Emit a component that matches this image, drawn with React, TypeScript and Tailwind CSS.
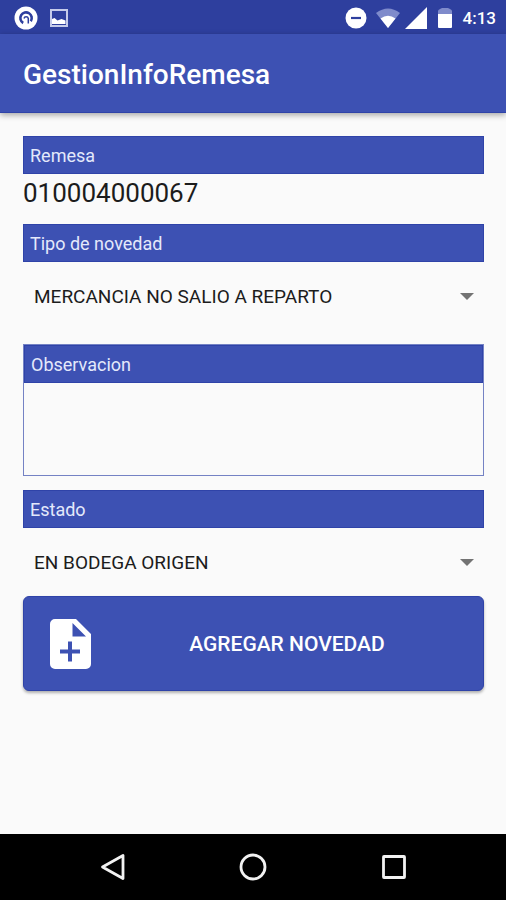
import React from "react";

type FieldLabelProps = {
  htmlFor: string;
  children: React.ReactNode;
};

function FieldLabel({ htmlFor, children }: FieldLabelProps) {
  return (
    <label
      htmlFor={htmlFor}
      className="block border border-[#2f43a8] bg-[#3d51b3] px-1.5 pt-[7px] pb-[5px] text-lg leading-6 text-[#e4e9fb]"
    >
      {children}
    </label>
  );
}

type SpinnerProps = {
  id: string;
  options: string[];
};

/** Android-style drop-down: plain text with a small caret on the right. */
function Spinner({ id, options }: SpinnerProps) {
  return (
    <div className="relative">
      <select
        id={id}
        className="h-[68px] w-full appearance-none bg-transparent pt-0.5 pr-10 pl-[11px] text-[19px] text-[#1c1c1c] outline-none"
      >
        {options.map((option) => (
          <option key={option}>{option}</option>
        ))}
      </select>
      <svg
        viewBox="0 0 14 7"
        className="pointer-events-none absolute top-[31px] right-2.5 h-[7px] w-3.5 fill-[#737373]"
        aria-hidden
      >
        <path d="M0 0h14L7 7z" />
      </svg>
    </div>
  );
}

function StatusBar() {
  return (
    <div className="flex h-[34px] items-center justify-between bg-[#2e3f9e] pt-px pr-2.5 pl-3.5 text-white">
      <div className="flex items-center gap-3">
        <svg viewBox="0 0 24 24" className="size-6" aria-hidden>
          <circle cx="12" cy="12" r="11.5" fill="#fff" />
          <path
            d="M9.200 17A5.700 5.700 0 1 1 16.800 15.200"
            fill="none"
            stroke="#2e3f9e"
            strokeWidth="2.600"
          />
          <path
            d="M10 12.500a2.200 2.200 0 0 1 4.300 0V17.500"
            fill="none"
            stroke="#2e3f9e"
            strokeWidth="1.500"
          />
        </svg>
        <svg viewBox="0 0 18 18" className="size-[18px]" aria-hidden>
          <rect x="1" y="1" width="16" height="16" fill="none" stroke="#c5cbea" strokeWidth="2" />
          <path d="M2 15v-5l2.500-1 3 2.500 4-1.500 4 1.500V15z" fill="#fff" />
        </svg>
      </div>
      <div className="flex items-center">
        <svg viewBox="0 0 22 22" className="size-[22px]" aria-hidden>
          <circle cx="11" cy="11" r="10.500" fill="#fff" />
          <path d="M6 11h10" stroke="#2e3f9e" strokeWidth="2.200" />
        </svg>
        <svg viewBox="0 0 26 20" className="ml-2 h-5 w-[26px]" aria-hidden>
          <path d="M1 5Q13-4 25 5L13 20z" fill="#7f8bcb" />
          <path d="M5.500 10.500Q13 5 20.500 10.500L13 20z" fill="#fff" />
        </svg>
        <svg viewBox="0 0 22 22" className="ml-1 size-[22px]" aria-hidden>
          <path d="M22 0v22H0z" fill="#fff" />
        </svg>
        <svg viewBox="0 0 16 22" className="ml-2.5 h-[22px] w-4" aria-hidden>
          <path d="M1 7V4q0-1 2-2l2-1h6l2 1q2 1 2 2v3z" fill="#7f8bcb" />
          <path d="M1 7h14v13q0 1-1 1H2q-1 0-1-1z" fill="#fff" />
        </svg>
        <span className="ml-2.5 text-[17px] leading-6 font-medium">4:13</span>
      </div>
    </div>
  );
}

function NavigationBar() {
  return (
    <nav className="grid h-[66px] grid-cols-3 bg-black px-[42px]">
      <button type="button" aria-label="Atrás" className="flex items-center justify-center">
        <svg viewBox="0 0 28 28" className="size-7" aria-hidden>
          <path
            d="M25 2.500v23L4.500 14z"
            fill="none"
            stroke="#f2f2f2"
            strokeWidth="2.800"
            strokeLinejoin="round"
          />
        </svg>
      </button>
      <button type="button" aria-label="Inicio" className="flex items-center justify-center">
        <svg viewBox="0 0 28 28" className="size-7" aria-hidden>
          <circle cx="14" cy="14" r="12" fill="none" stroke="#f2f2f2" strokeWidth="2.800" />
        </svg>
      </button>
      <button type="button" aria-label="Recientes" className="flex items-center justify-center">
        <svg viewBox="0 0 28 28" className="size-7" aria-hidden>
          <rect
            x="3.500"
            y="3.500"
            width="21"
            height="21"
            rx="0.500"
            fill="none"
            stroke="#f2f2f2"
            strokeWidth="2.800"
          />
        </svg>
      </button>
    </nav>
  );
}

export default function App() {
  return (
    <div className="flex min-h-screen flex-col bg-[#fafafa] font-[Roboto,sans-serif]">
      <StatusBar />
      <header className="flex h-[79px] items-center border-b border-[#2f43a8] bg-[#3d51b3] px-[23px] pt-1 shadow-[0_2px_6px_rgba(0,0,0,0.35)]">
        <h1 className="text-[28px] leading-8 font-medium text-white">GestionInfoRemesa</h1>
      </header>

      <main className="flex-1 pt-[23px] pr-[22px] pl-[23px]">
        <FieldLabel htmlFor="remesa">Remesa</FieldLabel>
        <output id="remesa" className="mb-3 block text-[26px] leading-[38px] text-[#1c1c1c]">
          010004000067
        </output>

        <FieldLabel htmlFor="tipo">Tipo de novedad</FieldLabel>
        <Spinner id="tipo" options={["MERCANCIA NO SALIO A REPARTO"]} />

        {/* The label and the box below it share one outline */}
        <div className="my-3.5 border border-[#7482c4]">
          <FieldLabel htmlFor="observacion">Observacion</FieldLabel>
          <textarea
            id="observacion"
            className="block h-[92px] w-full resize-none bg-transparent p-2 text-lg outline-none"
          />
        </div>

        <FieldLabel htmlFor="estado">Estado</FieldLabel>
        <Spinner id="estado" options={["EN BODEGA ORIGEN"]} />

        <button
          type="button"
          className="flex h-[95px] w-full items-center rounded-md border border-[#2f43a8] bg-[#3d51b3] pl-[26px] text-white shadow-[0_2px_3px_rgba(0,0,0,0.3)]"
        >
          <svg viewBox="0 0 41 50" className="h-[50px] w-[41px] shrink-0" aria-hidden>
            <path
              fillRule="evenodd"
              fill="#fff"
              d="M5 0H26L41 15V45a5 5 0 0 1-5 5H5a5 5 0 0 1-5-5V5a5 5 0 0 1 5-5zM22.500 4V17.500H36zM18 22.500V30.500H10V34.500H18V42.500H22V34.500H30V30.500H22V22.500z"
            />
          </svg>
          <span className="flex-1 text-center text-[21px] leading-6 font-medium">
            AGREGAR NOVEDAD
          </span>
        </button>
      </main>

      <NavigationBar />
    </div>
  );
}
